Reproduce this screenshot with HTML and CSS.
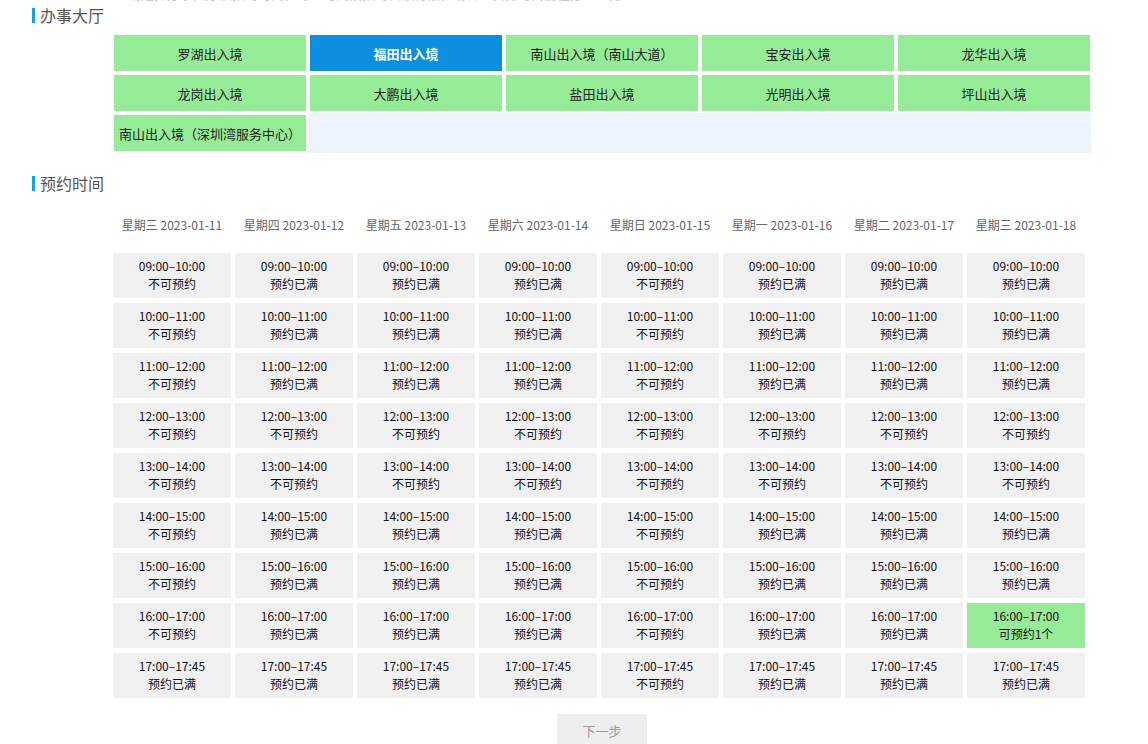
FILE: index.html
```html
<!DOCTYPE html>
<html lang="zh-CN">
<head>
<meta charset="utf-8">
<title>预约</title>
<link rel="stylesheet" href="styles.css">
</head>
<body>
<div class="page">
  <div class="topwrap"><p class="topline">请选择办事大厅及预约时间，每个时间段预约名额有限，请合理安排时间前往办理业务</p></div>
  <h2 class="sec-title">办事大厅</h2>
  <div class="halls">
    <div class="hall-row">
      <div class="hall">罗湖出入境</div>
      <div class="hall active">福田出入境</div>
      <div class="hall">南山出入境（南山大道）</div>
      <div class="hall">宝安出入境</div>
      <div class="hall">龙华出入境</div>
    </div>
    <div class="hall-row">
      <div class="hall">龙岗出入境</div>
      <div class="hall">大鹏出入境</div>
      <div class="hall">盐田出入境</div>
      <div class="hall">光明出入境</div>
      <div class="hall">坪山出入境</div>
    </div>
    <div class="hall-row">
      <div class="hall">南山出入境（深圳湾服务中心）</div>
      <div class="hall-filler"></div>
    </div>
  </div>

  <h2 class="sec-title second">预约时间</h2>
  <div class="days">
    <div class="day">星期三 2023-01-11</div>
    <div class="day">星期四 2023-01-12</div>
    <div class="day">星期五 2023-01-13</div>
    <div class="day">星期六 2023-01-14</div>
    <div class="day">星期日 2023-01-15</div>
    <div class="day">星期一 2023-01-16</div>
    <div class="day">星期二 2023-01-17</div>
    <div class="day">星期三 2023-01-18</div>
  </div>
  <div class="slots">
    <div class="slot"><span>09:00–10:00</span><span>不可预约</span></div>
    <div class="slot"><span>09:00–10:00</span><span>预约已满</span></div>
    <div class="slot"><span>09:00–10:00</span><span>预约已满</span></div>
    <div class="slot"><span>09:00–10:00</span><span>预约已满</span></div>
    <div class="slot"><span>09:00–10:00</span><span>不可预约</span></div>
    <div class="slot"><span>09:00–10:00</span><span>预约已满</span></div>
    <div class="slot"><span>09:00–10:00</span><span>预约已满</span></div>
    <div class="slot"><span>09:00–10:00</span><span>预约已满</span></div>

    <div class="slot"><span>10:00–11:00</span><span>不可预约</span></div>
    <div class="slot"><span>10:00–11:00</span><span>预约已满</span></div>
    <div class="slot"><span>10:00–11:00</span><span>预约已满</span></div>
    <div class="slot"><span>10:00–11:00</span><span>预约已满</span></div>
    <div class="slot"><span>10:00–11:00</span><span>不可预约</span></div>
    <div class="slot"><span>10:00–11:00</span><span>预约已满</span></div>
    <div class="slot"><span>10:00–11:00</span><span>预约已满</span></div>
    <div class="slot"><span>10:00–11:00</span><span>预约已满</span></div>

    <div class="slot"><span>11:00–12:00</span><span>不可预约</span></div>
    <div class="slot"><span>11:00–12:00</span><span>预约已满</span></div>
    <div class="slot"><span>11:00–12:00</span><span>预约已满</span></div>
    <div class="slot"><span>11:00–12:00</span><span>预约已满</span></div>
    <div class="slot"><span>11:00–12:00</span><span>不可预约</span></div>
    <div class="slot"><span>11:00–12:00</span><span>预约已满</span></div>
    <div class="slot"><span>11:00–12:00</span><span>预约已满</span></div>
    <div class="slot"><span>11:00–12:00</span><span>预约已满</span></div>

    <div class="slot"><span>12:00–13:00</span><span>不可预约</span></div>
    <div class="slot"><span>12:00–13:00</span><span>不可预约</span></div>
    <div class="slot"><span>12:00–13:00</span><span>不可预约</span></div>
    <div class="slot"><span>12:00–13:00</span><span>不可预约</span></div>
    <div class="slot"><span>12:00–13:00</span><span>不可预约</span></div>
    <div class="slot"><span>12:00–13:00</span><span>不可预约</span></div>
    <div class="slot"><span>12:00–13:00</span><span>不可预约</span></div>
    <div class="slot"><span>12:00–13:00</span><span>不可预约</span></div>

    <div class="slot"><span>13:00–14:00</span><span>不可预约</span></div>
    <div class="slot"><span>13:00–14:00</span><span>不可预约</span></div>
    <div class="slot"><span>13:00–14:00</span><span>不可预约</span></div>
    <div class="slot"><span>13:00–14:00</span><span>不可预约</span></div>
    <div class="slot"><span>13:00–14:00</span><span>不可预约</span></div>
    <div class="slot"><span>13:00–14:00</span><span>不可预约</span></div>
    <div class="slot"><span>13:00–14:00</span><span>不可预约</span></div>
    <div class="slot"><span>13:00–14:00</span><span>不可预约</span></div>

    <div class="slot"><span>14:00–15:00</span><span>不可预约</span></div>
    <div class="slot"><span>14:00–15:00</span><span>预约已满</span></div>
    <div class="slot"><span>14:00–15:00</span><span>预约已满</span></div>
    <div class="slot"><span>14:00–15:00</span><span>预约已满</span></div>
    <div class="slot"><span>14:00–15:00</span><span>不可预约</span></div>
    <div class="slot"><span>14:00–15:00</span><span>预约已满</span></div>
    <div class="slot"><span>14:00–15:00</span><span>预约已满</span></div>
    <div class="slot"><span>14:00–15:00</span><span>预约已满</span></div>

    <div class="slot"><span>15:00–16:00</span><span>不可预约</span></div>
    <div class="slot"><span>15:00–16:00</span><span>预约已满</span></div>
    <div class="slot"><span>15:00–16:00</span><span>预约已满</span></div>
    <div class="slot"><span>15:00–16:00</span><span>预约已满</span></div>
    <div class="slot"><span>15:00–16:00</span><span>不可预约</span></div>
    <div class="slot"><span>15:00–16:00</span><span>预约已满</span></div>
    <div class="slot"><span>15:00–16:00</span><span>预约已满</span></div>
    <div class="slot"><span>15:00–16:00</span><span>预约已满</span></div>

    <div class="slot"><span>16:00–17:00</span><span>不可预约</span></div>
    <div class="slot"><span>16:00–17:00</span><span>预约已满</span></div>
    <div class="slot"><span>16:00–17:00</span><span>预约已满</span></div>
    <div class="slot"><span>16:00–17:00</span><span>预约已满</span></div>
    <div class="slot"><span>16:00–17:00</span><span>不可预约</span></div>
    <div class="slot"><span>16:00–17:00</span><span>预约已满</span></div>
    <div class="slot"><span>16:00–17:00</span><span>预约已满</span></div>
    <div class="slot available"><span>16:00–17:00</span><span>可预约1个</span></div>

    <div class="slot"><span>17:00–17:45</span><span>预约已满</span></div>
    <div class="slot"><span>17:00–17:45</span><span>预约已满</span></div>
    <div class="slot"><span>17:00–17:45</span><span>预约已满</span></div>
    <div class="slot"><span>17:00–17:45</span><span>预约已满</span></div>
    <div class="slot"><span>17:00–17:45</span><span>不可预约</span></div>
    <div class="slot"><span>17:00–17:45</span><span>预约已满</span></div>
    <div class="slot"><span>17:00–17:45</span><span>预约已满</span></div>
    <div class="slot"><span>17:00–17:45</span><span>预约已满</span></div>
  </div>
  <div class="actions">
    <button class="next" type="button">下一步</button>
  </div>
</div>
</body>
</html>
```
FILE: styles.css
```css
html, body {
  margin: 0;
  padding: 0;
  background: #fff;
}
body {
  font-family: "Noto Sans CJK SC", "Noto Sans", sans-serif;
  color: #222;
  overflow: hidden;
}
.page {
  padding-left: 32px;
}
.topwrap {
  height: 2px;
  overflow: hidden;
  position: relative;
}
.topline {
  margin: -15px 0 0 96px;
  height: 17px;
  line-height: 17px;
  font-size: 13px;
  color: #c4c4c4;
  white-space: nowrap;
}
.sec-title {
  margin: 0;
  height: 26px;
  display: flex;
  align-items: center;
  font-size: 16px;
  font-weight: normal;
  color: #555;
}
.sec-title::before {
  content: "";
  width: 3px;
  height: 15px;
  background: #0ca4f2;
  margin-right: 5px;
}
.sec-title.second {
  margin-top: 19px;
}
.halls {
  margin: 7px 0 0 82px;
  width: 977px;
  display: flex;
  flex-direction: column;
  gap: 4px;
}
.hall-row {
  display: flex;
  gap: 4px;
  height: 36px;
}
.hall {
  width: 192px;
  flex: none;
  background: #96ec96;
  font-size: 13px;
  color: #222;
  display: flex;
  align-items: center;
  justify-content: center;
  white-space: nowrap;
}
.hall.active {
  background: #0c8fdf;
  color: #fff;
  font-weight: bold;
}
.hall-filler {
  flex: 1;
  margin: -2px 0 -2px -2px;
  background: #edf4fb;
}
.days {
  margin: 17px 0 0 81px;
  display: grid;
  grid-template-columns: repeat(8, 118px);
  column-gap: 4px;
  height: 24px;
}
.day {
  font-size: 12px;
  color: #666;
  line-height: 24px;
  text-align: center;
  white-space: nowrap;
}
.slots {
  margin: 16px 0 0 81px;
  display: grid;
  grid-template-columns: repeat(8, 118px);
  grid-auto-rows: 45px;
  column-gap: 4px;
  row-gap: 5px;
}
.slot {
  background: #f0f0f0;
  display: flex;
  flex-direction: column;
  align-items: center;
  padding-top: 4px;
  font-size: 12px;
  line-height: 18px;
  color: #111;
  box-sizing: border-box;
}
.slot.available {
  background: #96ec96;
}
.actions {
  margin: 16px 0 0 525px;
}
.next {
  width: 90px;
  height: 32px;
  border: 0;
  background: #eeeeee;
  color: #999;
  font-family: inherit;
  font-size: 13px;
  padding: 0;
}
```
